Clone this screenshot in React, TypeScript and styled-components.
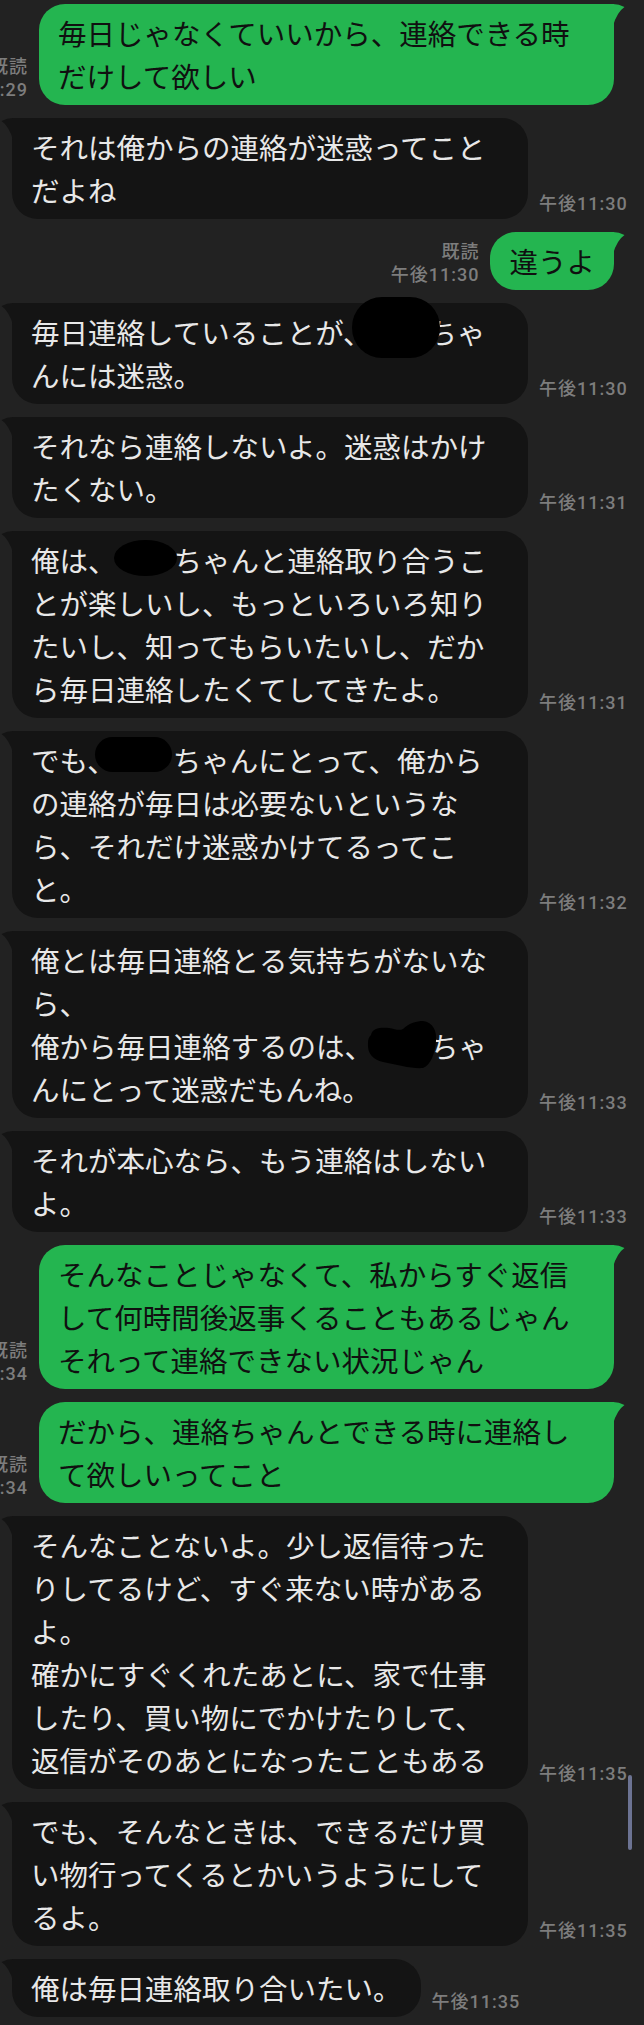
import React from "react";
import styled, { createGlobalStyle, css } from "styled-components";

type Side = "in" | "out";

const GlobalStyle = createGlobalStyle`
  html, body {
    margin: 0;
    padding: 0;
    background: #222222;
  }
  body {
    overflow: hidden;
  }
`;

const Screen = styled.main`
  position: relative;
  box-sizing: border-box;
  width: 644px;
  height: 2025px;
  overflow: hidden;
  background: #222222;
  display: flex;
  flex-direction: column;
  gap: 13px;
  padding-top: 4px;
  font-family: "Noto Sans CJK JP", "Noto Sans", sans-serif;
`;

const Row = styled.div<{ $side: Side }>`
  display: flex;
  align-items: flex-end;
  gap: 11px;
  justify-content: ${(p) => (p.$side === "out" ? "flex-end" : "flex-start")};
  padding: ${(p) => (p.$side === "out" ? "0 30px 0 0" : "0 0 0 12px")};
`;

const Bubble = styled.div<{ $side: Side; $full: boolean }>`
  position: relative;
  flex-shrink: 0;
  box-sizing: border-box;
  width: ${(p) => (p.$full ? (p.$side === "out" ? "575px" : "516px") : "auto")};
  padding: 7px 19px 8px;
  border-radius: 26px;
  font-size: 28.5px;
  line-height: 43px;
  white-space: nowrap;
  ${(p) =>
    p.$side === "out"
      ? css`
          background: #24b550;
          color: #101010;
          border-top-right-radius: 0;
        `
      : css`
          background: #141414;
          color: #e8e8e8;
          border-top-left-radius: 0;
        `}
`;

const Tail = styled.svg<{ $side: Side }>`
  position: absolute;
  top: 0;
  width: 12px;
  height: 22px;
  ${(p) =>
    p.$side === "out"
      ? css`
          left: calc(100% - 1px);
          fill: #24b550;
        `
      : css`
          right: calc(100% - 1px);
          transform: scaleX(-1);
          fill: #141414;
        `}
`;

const Meta = styled.div`
  flex-shrink: 0;
  display: flex;
  flex-direction: column;
  align-items: flex-end;
  padding-bottom: 4px;
  font-family: Roboto, "Noto Sans CJK JP", sans-serif;
  font-size: 18px;
  font-weight: 500;
  letter-spacing: 1px;
  line-height: 23px;
  color: #7d7d7d;
  white-space: nowrap;
`;

const NameSlot = styled.span`
  position: relative;
  display: inline-block;
  width: 2em;
  height: 43px;
  vertical-align: top;
`;

const Blot = styled.span<{ $l: number; $t: number; $w: number; $h: number; $r: string }>`
  position: absolute;
  left: ${(p) => p.$l}px;
  top: ${(p) => p.$t}px;
  width: ${(p) => p.$w}px;
  height: ${(p) => p.$h}px;
  border-radius: ${(p) => p.$r};
  background: #000;
`;

const HeartBlot = styled.svg`
  position: absolute;
  left: -6px;
  top: -3px;
  width: 70px;
  height: 48px;
  fill: #000;
`;

const ScrollThumb = styled.div`
  position: absolute;
  top: 1775px;
  right: 12px;
  width: 4px;
  height: 75px;
  border-radius: 2px;
  background: #6c7393;
`;

type Mask = "a" | "b" | "c" | "heart";

const masks: Record<Exclude<Mask, "heart">, { l: number; t: number; w: number; h: number; r: string }> = {
  a: { l: -20, t: -13, w: 88, h: 61, r: "30px" },
  b: { l: -3, t: 2, w: 63, h: 36, r: "50%" },
  c: { l: -21, t: -1, w: 77, h: 35, r: "18px" },
};

function Name({ kind }: { kind: Mask }) {
  if (kind === "heart") {
    return (
      <NameSlot>
        <HeartBlot viewBox="0 0 70 48">
          <path d="M4,14 C5,7 14,6 22,7 C28,8 32,10 36,8 C42,2 50,0 56,0 C66,1 70,10 69,20 C68,32 64,44 56,47 C46,48 30,44 16,41 C6,39 0,32 1,22 C1,18 2,16 4,14 Z" />
        </HeartBlot>
      </NameSlot>
    );
  }
  const m = masks[kind];
  return (
    <NameSlot>
      <Blot $l={m.l} $t={m.t} $w={m.w} $h={m.h} $r={m.r} />
    </NameSlot>
  );
}

type Msg = {
  side: Side;
  lines: string[];
  time: string;
  full: boolean;
  mask?: Mask;
};

const messages: Msg[] = [
  { side: "out", lines: ["毎日じゃなくていいから、連絡できる時", "だけして欲しい"], time: "午後11:29", full: true },
  { side: "in", lines: ["それは俺からの連絡が迷惑ってこと", "だよね"], time: "午後11:30", full: true },
  { side: "out", lines: ["違うよ"], time: "午後11:30", full: false },
  { side: "in", lines: ["毎日連絡していることが、{N}ちゃ", "んには迷惑。"], time: "午後11:30", full: true, mask: "a" },
  { side: "in", lines: ["それなら連絡しないよ。迷惑はかけ", "たくない。"], time: "午後11:31", full: true },
  {
    side: "in",
    lines: ["俺は、{N}ちゃんと連絡取り合うこ", "とが楽しいし、もっといろいろ知り", "たいし、知ってもらいたいし、だか", "ら毎日連絡したくてしてきたよ。"],
    time: "午後11:31",
    full: true,
    mask: "b",
  },
  {
    side: "in",
    lines: ["でも、{N}ちゃんにとって、俺から", "の連絡が毎日は必要ないというな", "ら、それだけ迷惑かけてるってこ", "と。"],
    time: "午後11:32",
    full: true,
    mask: "c",
  },
  {
    side: "in",
    lines: ["俺とは毎日連絡とる気持ちがないな", "ら、", "俺から毎日連絡するのは、{N}ちゃ", "んにとって迷惑だもんね。"],
    time: "午後11:33",
    full: true,
    mask: "heart",
  },
  { side: "in", lines: ["それが本心なら、もう連絡はしない", "よ。"], time: "午後11:33", full: true },
  {
    side: "out",
    lines: ["そんなことじゃなくて、私からすぐ返信", "して何時間後返事くることもあるじゃん", "それって連絡できない状況じゃん"],
    time: "午後11:34",
    full: true,
  },
  { side: "out", lines: ["だから、連絡ちゃんとできる時に連絡し", "て欲しいってこと"], time: "午後11:34", full: true },
  {
    side: "in",
    lines: [
      "そんなことないよ。少し返信待った",
      "りしてるけど、すぐ来ない時がある",
      "よ。",
      "確かにすぐくれたあとに、家で仕事",
      "したり、買い物にでかけたりして、",
      "返信がそのあとになったこともある",
    ],
    time: "午後11:35",
    full: true,
  },
  {
    side: "in",
    lines: ["でも、そんなときは、できるだけ買", "い物行ってくるとかいうようにして", "るよ。"],
    time: "午後11:35",
    full: true,
  },
  { side: "in", lines: ["俺は毎日連絡取り合いたい。"], time: "午後11:35", full: false },
];

function Line({ text, mask }: { text: string; mask?: Mask }) {
  const parts = text.split("{N}");
  return (
    <>
      {parts.map((part, i) => (
        <React.Fragment key={i}>
          {i > 0 && mask && <Name kind={mask} />}
          {part}
        </React.Fragment>
      ))}
    </>
  );
}

function Message({ msg }: { msg: Msg }) {
  const bubble = (
    <Bubble $side={msg.side} $full={msg.full}>
      <Tail $side={msg.side} viewBox="0 0 12 22">
        <path d="M0,0 Q6,0 11.5,3 Q4,8 0,22 Z" />
      </Tail>
      {msg.lines.map((l, i) => (
        <React.Fragment key={i}>
          {i > 0 && <br />}
          <Line text={l} mask={msg.mask} />
        </React.Fragment>
      ))}
    </Bubble>
  );
  if (msg.side === "out") {
    return (
      <Row $side="out">
        <Meta>
          <span>既読</span>
          <span>{msg.time}</span>
        </Meta>
        {bubble}
      </Row>
    );
  }
  return (
    <Row $side="in">
      {bubble}
      <Meta>
        <span>{msg.time}</span>
      </Meta>
    </Row>
  );
}

export default function App() {
  return (
    <>
      <GlobalStyle />
      <Screen>
        {messages.map((m, i) => (
          <Message key={i} msg={m} />
        ))}
        <ScrollThumb />
      </Screen>
    </>
  );
}
